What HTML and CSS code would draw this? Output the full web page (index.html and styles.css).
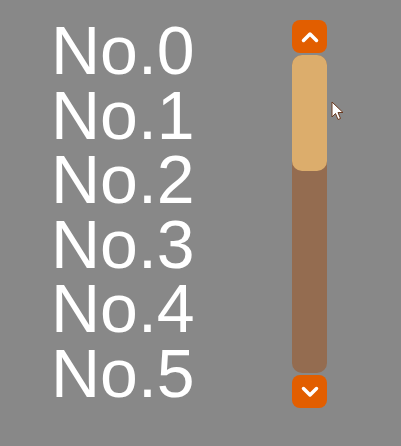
FILE: index.html
```html
<!DOCTYPE html>
<html>
<head>
<meta charset="utf-8">
<link rel="stylesheet" href="styles.css">
</head>
<body>
<div class="app">
  <ul class="list">
    <li>No.0</li>
    <li>No.1</li>
    <li>No.2</li>
    <li>No.3</li>
    <li>No.4</li>
    <li>No.5</li>
  </ul>
  <div class="scrollbar">
    <div class="btn">
      <svg width="18" height="12" viewBox="0 0 18 12"><path d="M2.5 9.5 L9 3 L15.5 9.5" fill="none" stroke="#fff" stroke-width="3.5" stroke-linecap="round" stroke-linejoin="round"/></svg>
    </div>
    <div class="track">
      <div class="thumb"></div>
    </div>
    <div class="btn">
      <svg width="18" height="12" viewBox="0 0 18 12"><path d="M2.5 2.5 L9 9 L15.5 2.5" fill="none" stroke="#fff" stroke-width="3.5" stroke-linecap="round" stroke-linejoin="round"/></svg>
    </div>
  </div>
  <svg class="cursor" width="14" height="21" viewBox="0 0 14 21"><path d="M1 1 L1 16 L4.5 12.5 L7 18.5 L9.5 17.5 L7 11.5 L12 11.5 Z" fill="#fff" stroke="#6b3a20" stroke-width="1" stroke-linejoin="round"/></svg>
</div>
</body>
</html>
```
FILE: styles.css
```css
html, body {
  margin: 0;
  padding: 0;
  background: #888888;
}
.app {
  position: relative;
  width: 401px;
  height: 446px;
  display: flex;
  align-items: flex-start;
}
.list {
  list-style: none;
  margin: 18px 0 0 51px;
  padding: 0;
  width: 241px;
  font-family: "Liberation Sans", Arial, sans-serif;
  font-size: 68px;
  line-height: 64.5px;
  color: #ffffff;
}
.scrollbar {
  margin-top: 20px;
  width: 35px;
  display: flex;
  flex-direction: column;
  gap: 2px;
}
.btn {
  height: 33px;
  background: #e25e00;
  border-radius: 8px;
  display: flex;
  align-items: center;
  justify-content: center;
}
.track {
  height: 318px;
  background: #946c50;
  border-radius: 10px;
  display: flex;
  flex-direction: column;
}
.thumb {
  height: 116px;
  background: #dcad6c;
  border-radius: 10px;
}
.cursor {
  position: absolute;
  left: 331px;
  top: 101px;
}
```
